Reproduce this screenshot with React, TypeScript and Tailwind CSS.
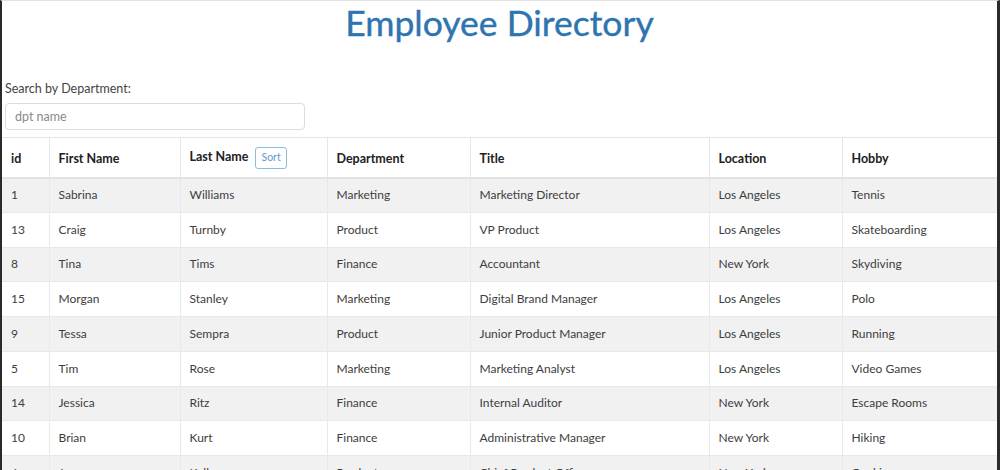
import React, { useState } from "react";

type Employee = {
  id: number;
  first: string;
  last: string;
  dept: string;
  title: string;
  location: string;
  hobby: string;
};

const employees: Employee[] = [
  { id: 1, first: "Sabrina", last: "Williams", dept: "Marketing", title: "Marketing Director", location: "Los Angeles", hobby: "Tennis" },
  { id: 13, first: "Craig", last: "Turnby", dept: "Product", title: "VP Product", location: "Los Angeles", hobby: "Skateboarding" },
  { id: 8, first: "Tina", last: "Tims", dept: "Finance", title: "Accountant", location: "New York", hobby: "Skydiving" },
  { id: 15, first: "Morgan", last: "Stanley", dept: "Marketing", title: "Digital Brand Manager", location: "Los Angeles", hobby: "Polo" },
  { id: 9, first: "Tessa", last: "Sempra", dept: "Product", title: "Junior Product Manager", location: "Los Angeles", hobby: "Running" },
  { id: 5, first: "Tim", last: "Rose", dept: "Marketing", title: "Marketing Analyst", location: "Los Angeles", hobby: "Video Games" },
  { id: 14, first: "Jessica", last: "Ritz", dept: "Finance", title: "Internal Auditor", location: "New York", hobby: "Escape Rooms" },
  { id: 10, first: "Brian", last: "Kurt", dept: "Finance", title: "Administrative Manager", location: "New York", hobby: "Hiking" },
  { id: 6, first: "Jason", last: "Kelly", dept: "Product", title: "Chief Product Officer", location: "New York", hobby: "Cooking" },
];

export default function App() {
  const [search, setSearch] = useState("");

  const rows = employees.filter((e) =>
    e.dept.toLowerCase().includes(search.toLowerCase())
  );

  const th = "border-x border-[#e6e6e6] px-[9px] pb-[8px] text-left align-bottom text-[12.5px] font-bold text-[#212121]";
  const td = "border-x border-[#e9e9e9] px-[9px] align-middle";

  return (
    <div className="h-[470px] overflow-hidden border-t border-l-[2px] border-r-[3px] border-t-[#e2e2e2] border-l-[#2a2a2a] border-r-[#2a2a2a] bg-white font-['Lato','Liberation_Sans',sans-serif] text-[12px] text-[#3d3d3d]">
      <h1 className="text-center text-[35.5px] leading-[44px] font-normal text-[#2e75b0] [-webkit-text-stroke:0.4px_#2e75b0]">
        Employee Directory
      </h1>

      <div className="mt-[36px] px-[3px]">
        <label className="block text-[12.5px] leading-[16px] text-[#444]">Search by Department:</label>
        <input
          value={search}
          onChange={(e) => setSearch(e.target.value)}
          placeholder="dpt name"
          className="mt-[6px] h-[27px] w-[300px] rounded-[4px] border border-[#dcdcdc] px-[9px] text-[12.5px] outline-none placeholder:text-[#8a8a8a]"
        />
      </div>

      <table className="mt-[7px] w-[995px] table-fixed border-collapse">
        <colgroup>
          <col className="w-[47px]" />
          <col className="w-[131px]" />
          <col className="w-[147px]" />
          <col className="w-[143px]" />
          <col className="w-[239px]" />
          <col className="w-[133px]" />
          <col className="w-[155px]" />
        </colgroup>
        <thead>
          <tr className="h-[40px] border-t border-b-2 border-t-[#e6e6e6] border-b-[#e2e2e2]">
            <th className={th + " border-l-0"}>id</th>
            <th className={th}>First Name</th>
            <th className={th}>
              <div className="flex items-center gap-[7px]">
                <span>Last Name</span>
                <button className="h-[22px] rounded-[3px] border border-[#8cbcd9] px-[5px] text-[10.5px] font-normal text-[#5b9cc9]">
                  Sort
                </button>
              </div>
            </th>
            <th className={th}>Department</th>
            <th className={th}>Title</th>
            <th className={th}>Location</th>
            <th className={th + " border-r-0"}>Hobby</th>
          </tr>
        </thead>
        <tbody>
          {rows.map((e, i) => (
            <tr
              key={e.id}
              className={
                "h-[34.75px] border-t border-[#e8e8e8] " +
                (i % 2 === 0 ? "bg-[#f1f1f2]" : "bg-white")
              }
            >
              <td className={td + " border-l-0"}>{e.id}</td>
              <td className={td}>{e.first}</td>
              <td className={td}>{e.last}</td>
              <td className={td}>{e.dept}</td>
              <td className={td}>{e.title}</td>
              <td className={td}>{e.location}</td>
              <td className={td + " border-r-0"}>{e.hobby}</td>
            </tr>
          ))}
        </tbody>
      </table>
    </div>
  );
}
